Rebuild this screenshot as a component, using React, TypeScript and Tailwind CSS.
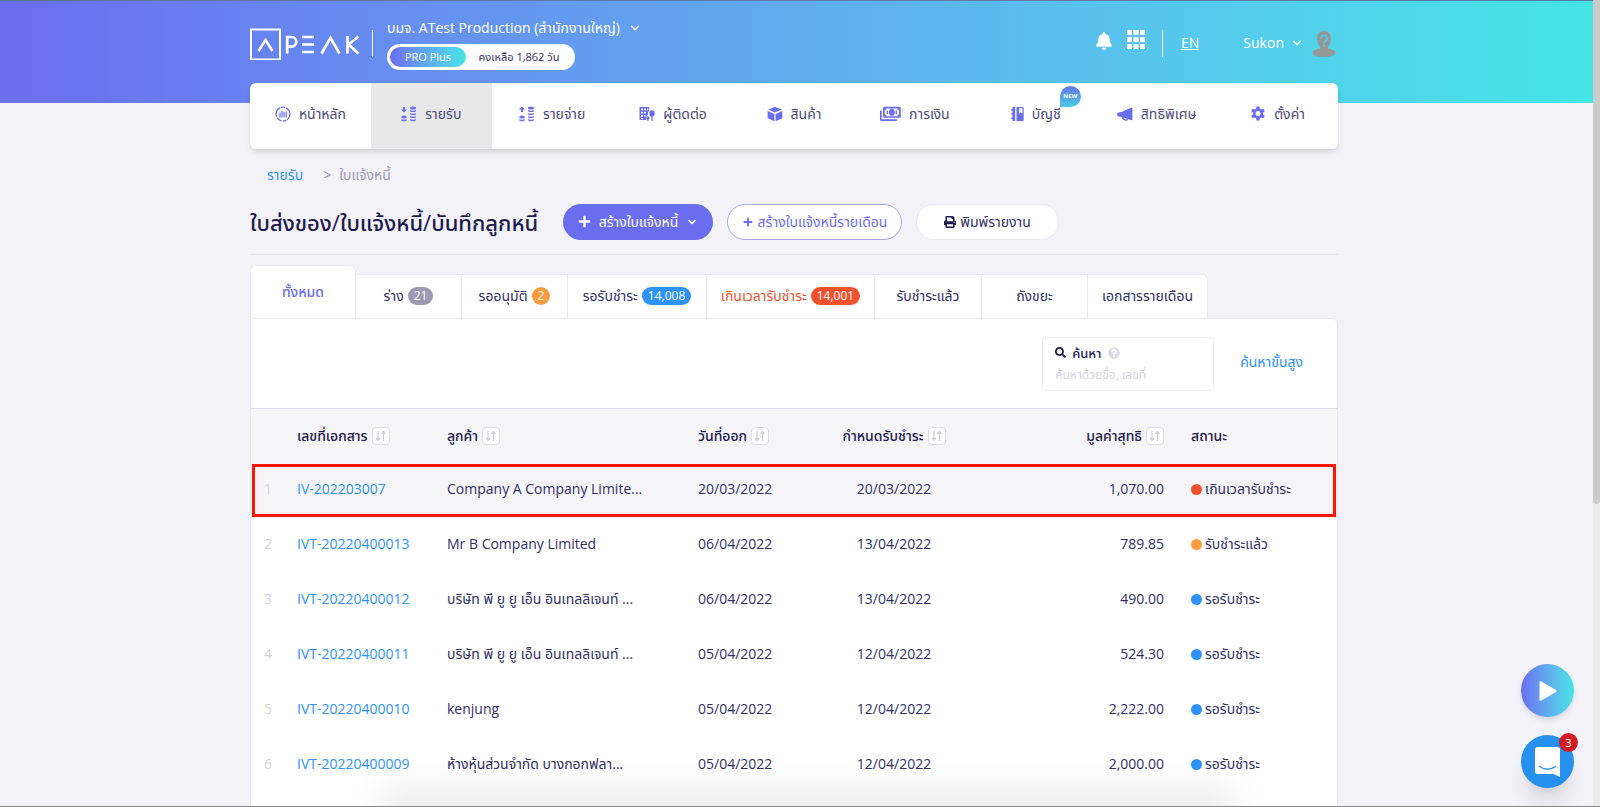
import React from 'react';
import { ChevronDown, Plus } from 'lucide-react';
import { FaBell, FaPlus, FaPrint, FaSearch, FaQuestionCircle } from 'react-icons/fa';

type IconProps = { className?: string };

function DashboardIcon({ className = 'h-4 w-4' }: IconProps) {
  return (
    <svg viewBox="0 0 16 16" className={className} fill="none" stroke="currentColor" strokeWidth="1.3" strokeLinecap="round" aria-hidden="true">
      <path d="M5 1.8A7 7 0 0 0 1.4 10.3M2.4 12.2A7 7 0 0 0 6.2 14.8M8.6 15A7 7 0 0 0 11 14.3M12.6 13.2A7 7 0 0 0 11.6 2.1M9.7 1.3A7 7 0 0 0 6.6 1.2" />
      <path d="M5 7.200V11M7 5V11M9 6.400V11M11.200 5.800V11" strokeWidth="1.2" />
    </svg>
  );
}

function CoinsIcon({ up = false }: { up?: boolean }) {
  return (
    <svg viewBox="0 0 16 16" className="h-4 w-4" fill="currentColor" aria-hidden="true">
      <path d={up ? 'M3 .6 6 3.6H4V6H2V3.6H0z' : 'M3 6.4 6 3.4H4V1H2v2.4H0z'} />
      <ellipse cx="3" cy="10.9" rx="2.8" ry="1.5" />
      <ellipse cx="12" cy="1.9" rx="3" ry="1.5" />
      <path d="M.3 12.9c1.200 1 4.200 1 5.400 0v1.300c-1 1.300-4.400 1.300-5.400 0zM9.100 4c1.300 1 4.500 1 5.800 0v1.200c-1.200 1.200-4.600 1.200-5.800 0zM9.100 7c1.300 1 4.500 1 5.800 0v1.200c-1.200 1.200-4.600 1.200-5.800 0zM9.100 10c1.300 1 4.500 1 5.800 0v1.200c-1.200 1.200-4.600 1.200-5.800 0zM9.100 12.900c1.300 1 4.500 1 5.800 0v1.300c-1.200 1.300-4.600 1.300-5.800 0z" />
    </svg>
  );
}

function ContactIcon() {
  return (
    <svg viewBox="0 0 16 16" className="h-4 w-4" fill="currentColor" aria-hidden="true">
      <path fillRule="evenodd" d="M.5 1h9.800v3.600A3.600 3.600 0 0 0 9 8.500L7 11v3H.5zM2 2.500v1.800h1.900V2.500zm3 0v1.800h1.900V2.500zm3 0v1.800h1.300V2.500zM2 5.700v1.800h1.900V5.700zm3 0v1.800h1.900V5.700zM2 8.900v1.800h1.900V8.900zm3 0v1.600h1.500V8.900zM2 12v1.300h1.900V12z" />
      <ellipse cx="13" cy="7.400" rx="2.700" ry="3.200" />
      <path d="M12.400 10h1.300v5h-1.300zM8.300 12.400h1.200V15H8.300z" />
      <circle cx="8.900" cy="11.900" r="1.700" />
    </svg>
  );
}

function BoxIcon() {
  return (
    <svg viewBox="0 0 16 16" className="h-4 w-4" fill="currentColor" aria-hidden="true">
      <path d="M8 .8 14.600 3.600 8 6.500 1.400 3.600zM.6 5l6.800 2.900v7.400L.6 12.300zM15.400 5 8.600 7.900v7.400l6.800-3z" />
    </svg>
  );
}

function MoneyIcon() {
  return (
    <svg viewBox="0 0 21 16" className="h-4 w-[21px]" fill="currentColor" aria-hidden="true">
      <path d="M0 4.500h1.700v8.800H17V15H1.500A1.500 1.500 0 0 1 0 13.500z" />
      <path fillRule="evenodd" d="M4.500.8h14.800a1.500 1.500 0 0 1 1.500 1.500v8a1.500 1.500 0 0 1-1.500 1.500H4.500A1.500 1.500 0 0 1 3 10.300v-8A1.500 1.500 0 0 1 4.500.8zM6.500 2.400A1.800 1.800 0 0 1 4.700 4.200v4.200a1.800 1.800 0 0 1 1.800 1.800h10.800a1.800 1.800 0 0 1 1.800-1.800V4.200a1.800 1.800 0 0 1-1.800-1.800z" />
      <ellipse cx="11.900" cy="6.300" rx="2.900" ry="3.500" />
      <path d="M6.700 4.400h1.400v3.800H6.700zM15.700 4.400h1.400v3.800h-1.400z" />
    </svg>
  );
}

function LedgerIcon() {
  return (
    <svg viewBox="0 0 13 16" className="h-4 w-[13px]" fill="currentColor" aria-hidden="true">
      <path d="M1.500 1h2.700v14H1.500v-2H.2v-1.500h1.300V8.700H.2V7.200h1.300V4.500H.2V3h1.300z" />
      <path fillRule="evenodd" d="M5.500 1h6a1.200 1.200 0 0 1 1.200 1.200v11.600a1.200 1.200 0 0 1-1.200 1.200h-6zm2.700 1.200v5.600l1.600-1.300 1.600 1.300V2.200z" />
    </svg>
  );
}

function HornIcon() {
  return (
    <svg viewBox="0 0 16 16" className="h-4 w-4" fill="currentColor" aria-hidden="true">
      <path d="M14.500 1.500a.7.700 0 0 1 .9.700v11.300a.7.700 0 0 1-.9.700L5.600 11.300V5.500zM5.800 5.500v5.700L1 10.300a1 1 0 0 1-.8-1V7.700a1 1 0 0 1 .8-1z" />
      <path d="M5.300 11.200c.5 3 4.700 3.600 5.300 1.700" fill="none" stroke="currentColor" strokeWidth="1.500" />
    </svg>
  );
}

function GearIcon() {
  return (
    <svg viewBox="0 0 16 16" className="h-4 w-4" fill="currentColor" aria-hidden="true">
      <path fillRule="evenodd" d="M6.500.6h3l.4 2.200a5.500 5.500 0 0 1 1.200.7l2.200-.8 1.500 2.600-1.800 1.400a5.500 5.500 0 0 1 0 1.600l1.800 1.400-1.500 2.600-2.200-.8a5.500 5.500 0 0 1-1.200.7l-.4 2.200h-3l-.4-2.200a5.500 5.500 0 0 1-1.200-.7l-2.200.8L1.200 9.700 3 8.300a5.500 5.500 0 0 1 0-1.600L1.200 5.300l1.500-2.600 2.200.8a5.500 5.500 0 0 1 1.200-.7zM8 5a2.500 2.500 0 1 0 0 5 2.500 2.500 0 0 0 0-5z" />
    </svg>
  );
}

function SortIcon() {
  return (
    <svg viewBox="0 0 12 12" className="h-3 w-3" fill="none" stroke="currentColor" strokeWidth="1.300" aria-hidden="true">
      <path d="M3 1v9M1 8l2 2.400L5 8M8.500 11V2M6.500 4l2-2.400L10.500 4" />
    </svg>
  );
}

function Logo() {
  return (
    <svg viewBox="0 0 110 32" className="h-8 w-[110px]" fill="none" stroke="white" role="img" aria-label="PEAK">
      <rect x="1" y="1.500" width="29" height="30" strokeWidth="2" />
      <path d="M8.500 23 15.500 12l7 11" strokeWidth="2.500" />
      <path d="M37.200 25.500V9h4.300a4.800 4.800 0 0 1 0 9.600h-4.300M52 9h12M52 16.500h12M52 24h12M71.500 25.500 80.500 10l9 15.500M97.500 8v17.500M108.500 8.500 98.500 16.500l10 9" strokeWidth="2.700" />
    </svg>
  );
}

function AvatarIcon() {
  return (
    <svg viewBox="0 0 24 28" className="h-7 w-6" aria-hidden="true">
      <path fill="#979797" d="M12 1c4.300 0 6.800 2.600 6.800 6.800 0 3.300-.9 6.600-2.800 9v1.600c4.200.8 7.500 2.300 7.500 4.300C22.500 26 18 27 12 27S1.500 26 .5 22.700c0-2 3.300-3.500 7.500-4.300v-1.600c-1.900-2.400-2.800-5.700-2.800-9C5.200 3.600 7.700 1 12 1z" />
      <path d="M9 8.600a3 3 0 1 1 4.500 2.300c-1 .6-1.500 1-1.500 2.300" fill="none" stroke="#50cbe3" strokeWidth="1.900" />
      <circle cx="12" cy="15.700" r="1.200" fill="#50cbe3" />
    </svg>
  );
}

const menu = [
  { label: 'หน้าหลัก', icon: <DashboardIcon /> },
  { label: 'รายรับ', icon: <CoinsIcon />, active: true },
  { label: 'รายจ่าย', icon: <CoinsIcon up /> },
  { label: 'ผู้ติดต่อ', icon: <ContactIcon /> },
  { label: 'สินค้า', icon: <BoxIcon /> },
  { label: 'การเงิน', icon: <MoneyIcon /> },
  { label: 'บัญชี', icon: <LedgerIcon />, isNew: true },
  { label: 'สิทธิพิเศษ', icon: <HornIcon /> },
  { label: 'ตั้งค่า', icon: <GearIcon /> },
];

const tabs = [
  { label: 'ร่าง', width: 'w-[106px]', count: '21', badge: 'bg-[#9c9bb3]', text: 'text-[#302f66]' },
  { label: 'รออนุมัติ', width: 'w-[106px]', count: '2', badge: 'bg-[#ff9b3f]', text: 'text-[#302f66]' },
  { label: 'รอรับชำระ', width: 'w-[139px]', count: '14,008', badge: 'bg-[#2d93fb]', text: 'text-[#302f66]' },
  { label: 'เกินเวลารับชำระ', width: 'w-[168px]', count: '14,001', badge: 'bg-[#f1512d]', text: 'text-[#f1512d]' },
  { label: 'รับชำระแล้ว', width: 'w-[107px]', text: 'text-[#302f66]' },
  { label: 'ถังขยะ', width: 'w-[106px]', text: 'text-[#302f66]' },
  { label: 'เอกสารรายเดือน', width: 'w-[120px]', text: 'text-[#302f66]' },
];

const rows = [
  { id: 'IV-202203007', customer: 'Company A Company Limite...', date: '20/03/2022', due: '20/03/2022', net: '1,070.00', status: 'เกินเวลารับชำระ', dot: 'bg-[#f1512d]' },
  { id: 'IVT-20220400013', customer: 'Mr B Company Limited', date: '06/04/2022', due: '13/04/2022', net: '789.85', status: 'รับชำระแล้ว', dot: 'bg-[#ff9b3f]' },
  { id: 'IVT-20220400012', customer: 'บริษัท พี ยู ยู เอ็น อินเทลลิเจนท์ ...', date: '06/04/2022', due: '13/04/2022', net: '490.00', status: 'รอรับชำระ', dot: 'bg-[#2d93fb]' },
  { id: 'IVT-20220400011', customer: 'บริษัท พี ยู ยู เอ็น อินเทลลิเจนท์ ...', date: '05/04/2022', due: '12/04/2022', net: '524.30', status: 'รอรับชำระ', dot: 'bg-[#2d93fb]' },
  { id: 'IVT-20220400010', customer: 'kenjung', date: '05/04/2022', due: '12/04/2022', net: '2,222.00', status: 'รอรับชำระ', dot: 'bg-[#2d93fb]' },
  { id: 'IVT-20220400009', customer: 'ห้างหุ้นส่วนจำกัด บางกอกฟลา...', date: '05/04/2022', due: '12/04/2022', net: '2,000.00', status: 'รอรับชำระ', dot: 'bg-[#2d93fb]' },
];

function HeadCell({ children, align = 'justify-start' }: { children: React.ReactNode; align?: string }) {
  return (
    <div className={`flex items-center gap-1 whitespace-nowrap ${align}`}>
      <span>{children}</span>
      <button type="button" aria-label="เรียงลำดับ" className="flex h-[18px] w-[18px] items-center justify-center rounded-sm border border-[#dddde0] bg-white text-[#cfcfd3]">
        <SortIcon />
      </button>
    </div>
  );
}

function Header() {
  return (
    <header className="h-[103px] border-t border-[#5d78a8] bg-linear-to-r from-[#6a6df0] to-[#44e5e7] pr-[5px]">
      <div className="mx-auto flex w-[1088px] max-w-full items-start text-white">
        <a href="#home" className="mt-[27px]"><Logo /></a>
        <div className="mt-[29px] ml-3 h-[27px] w-px bg-white" />
        <div className="mt-[15px] ml-[14px]">
          <button type="button" className="flex h-6 items-center gap-2 text-sm whitespace-nowrap">
            บมจ. ATest Production (สำนักงานใหญ่)
            <ChevronDown className="h-[14px] w-[14px]" strokeWidth={2.5} />
          </button>
          <div className="mt-1 flex h-[26px] w-[188px] items-center rounded-full bg-white p-[3px] text-[11px]">
            <span className="flex h-5 w-[76px] items-center justify-center rounded-full bg-linear-to-r from-[#6a6df0] to-[#44e5e7]">PRO Plus</span>
            <span className="grow text-center text-[#302f66]">คงเหลือ 1,862 วัน</span>
          </div>
        </div>
        <div className="mt-[29px] mr-[2px] ml-auto flex items-start">
          <button type="button" aria-label="การแจ้งเตือน" className="pt-[2px]"><FaBell className="h-[18px] w-4" /></button>
          <button type="button" aria-label="แอป" className="ml-[15px]">
            <svg viewBox="0 0 18 19" className="h-[19px] w-[18px]" fill="white" aria-hidden="true">
              <path d="M0 0h5v5H0zM6.500 0h5v5h-5zM13 0h5v5h-5zM0 7h5v5H0zM6.500 7h5v5h-5zM13 7h5v5h-5zM0 14h5v5H0zM6.500 14h5v5h-5zM13 14h5v5h-5z" />
            </svg>
          </button>
          <div className="ml-[17px] h-[27px] w-px bg-white" />
          <a href="#en" className="mt-[3px] ml-[18px] text-sm leading-5 underline">EN</a>
          <button type="button" className="mt-[3px] ml-11 flex items-center gap-[6px] text-sm leading-5">
            Sukon
            <ChevronDown className="h-[14px] w-[14px]" strokeWidth={2.5} />
          </button>
          <div className="ml-2"><AvatarIcon /></div>
        </div>
      </div>
    </header>
  );
}

function Menu() {
  return (
    <div className="-mt-5 pr-[5px]">
      <nav className="relative mx-auto flex h-[66px] w-[1088px] max-w-full overflow-hidden rounded-md bg-white text-sm text-[#4b4a78] shadow-md">
        {menu.map((m) => (
          <a key={m.label} href="#menu" className={`flex grow basis-0 items-center justify-center gap-2 pb-1 whitespace-nowrap ${m.active ? 'bg-[#e8e8e8]' : ''}`}>
            <span className="text-[#6a6df0]">{m.icon}</span>
            <span className="relative">
              {m.label}
              {m.isNew && (
                <span className="absolute -top-[18px] left-7 flex h-[21px] w-[21px] items-center justify-center rounded-full rounded-bl-none bg-linear-to-b from-[#6075ea] to-[#46cbe6] text-[6px] font-bold text-white">NEW</span>
              )}
            </span>
          </a>
        ))}
      </nav>
    </div>
  );
}

export default function App() {
  return (
    <div className="relative flex h-screen overflow-hidden bg-[#f3f2f8] font-['Open_Sans','Noto_Sans_Thai','Noto_Sans',sans-serif] text-sm text-[#302f66]">
      <div className="min-w-0 grow">
        <Header />
        <Menu />
        <div className="pr-[5px]">
          <main className="mx-auto w-[1088px] max-w-full">
            <div className="flex items-center gap-2 pt-4 pl-[17px] text-sm leading-5">
              <a href="#income" className="text-[#2d93fb]">รายรับ</a>
              <span className="pl-3 text-[#9c9bb3]">&gt;</span>
              <span className="text-[#9c9bb3]">ใบแจ้งหนี้</span>
            </div>
            <div className="mt-[19px] flex h-[51px] items-start border-b border-[#e4e4ec]">
              <h1 className="w-[313px] text-[22px] leading-9 font-medium whitespace-nowrap text-[#1c1a4e]">ใบส่งของ/ใบแจ้งหนี้/บันทึกลูกหนี้</h1>
              <button type="button" className="flex h-9 w-[150px] items-center justify-center gap-2 rounded-full bg-[#6a6df0] pb-px whitespace-nowrap text-white">
                <FaPlus className="h-[13px] w-[13px]" />สร้างใบแจ้งหนี้<ChevronDown className="h-3 w-3" strokeWidth={3} />
              </button>
              <button type="button" className="ml-[14px] flex h-9 w-[175px] items-center justify-center gap-1 rounded-full border border-[#a4a5f5] bg-white pb-px whitespace-nowrap text-[#6a6df0]">
                <Plus className="h-3 w-3" strokeWidth={4} />สร้างใบแจ้งหนี้รายเดือน
              </button>
              <button type="button" className="ml-[14px] flex h-9 w-[143px] items-center justify-center gap-1 rounded-full border border-[#e9e8f1] bg-white pb-px whitespace-nowrap">
                <FaPrint className="h-3 w-3 text-[#1c1a4e]" />พิมพ์รายงาน
              </button>
            </div>

            <div className="mt-[10px] flex items-end">
              <button type="button" className="h-[53px] w-[106px] rounded-t-md border border-b-0 border-[#e9e8f1] bg-white font-medium text-[#6a6df0]">ทั้งหมด</button>
              {tabs.map((t) => (
                <button key={t.label} type="button" className={`flex h-11 items-center justify-center gap-1 border-t border-r border-[#e9e8f1] bg-white pb-px whitespace-nowrap last:rounded-tr-md ${t.width} ${t.text}`}>
                  {t.label}
                  {t.count && <span className={`rounded-full px-[6px] text-xs leading-[18px] text-white ${t.badge}`}>{t.count}</span>}
                </button>
              ))}
            </div>

            <section className="rounded-tr-md border border-[#e9e8f1] bg-white">
              <div className="flex h-[89px] items-center justify-end">
                <div className="h-[54px] w-[172px] rounded border border-[#ebebf2] px-3 pt-[3px]">
                  <label htmlFor="search" className="flex items-center gap-[6px] text-[13px] leading-6 font-medium text-[#1c1a4e]">
                    <FaSearch className="h-[11px] w-[11px]" />ค้นหา<FaQuestionCircle className="h-3 w-3 text-[#dcdce8]" />
                  </label>
                  <input id="search" type="text" placeholder="ค้นหาด้วยชื่อ, เลขที่" className="block h-5 w-full text-xs outline-none placeholder:text-[#d5d5df]" />
                </div>
                <a href="#advanced" className="mr-[34px] ml-[26px] pb-1 whitespace-nowrap text-[#2d93fb]">ค้นหาขั้นสูง</a>
              </div>
              <table className="w-full table-fixed border-collapse whitespace-nowrap">
                <colgroup>
                  <col className="w-[46px]" />
                  <col className="w-[150px]" />
                  <col className="w-[251px]" />
                  <col className="w-[121px]" />
                  <col className="w-[150px]" />
                  <col className="w-[195px]" />
                  <col />
                </colgroup>
                <thead>
                  <tr className="h-[54px] border-t border-[#dcdce6] bg-[#f5f5f8] text-left font-medium text-[#1c1a4e]">
                    <td />
                    <th className="font-medium"><HeadCell>เลขที่เอกสาร</HeadCell></th>
                    <th className="font-medium"><HeadCell>ลูกค้า</HeadCell></th>
                    <th className="font-medium"><HeadCell>วันที่ออก</HeadCell></th>
                    <th className="font-medium"><HeadCell align="justify-center">กำหนดรับชำระ</HeadCell></th>
                    <th className="font-medium"><HeadCell align="justify-end">มูลค่าสุทธิ</HeadCell></th>
                    <th className="pl-[27px] font-medium">สถานะ</th>
                  </tr>
                </thead>
                <tbody>
                  {rows.map((r, i) => (
                    <tr key={r.id} className={`h-[55px] *:pb-[2px] ${i === 0 ? 'bg-[#f5f5f8] outline-3 -outline-offset-4 outline-[#fb1705]' : ''}`}>
                      <td className="pl-[13px] text-[#d3d3d8]">{i + 1}</td>
                      <td><a href="#document" className="text-[#2d93fb]">{r.id}</a></td>
                      <td>{r.customer}</td>
                      <td>{r.date}</td>
                      <td className="text-center">{r.due}</td>
                      <td className="text-right">{r.net}</td>
                      <td className="pl-[27px]">
                        <span className="flex items-center gap-[3px]"><span className={`h-[11px] w-[11px] rounded-full ${r.dot}`} />{r.status}</span>
                      </td>
                    </tr>
                  ))}
                </tbody>
              </table>
              <div className="h-16" />
            </section>
          </main>
        </div>
      </div>
      <div className="w-[7px] shrink-0 bg-[#ececec]"><div className="h-[504px] rounded-b-full bg-[#cbcbcb]" /></div>

      <div className="pointer-events-none absolute right-[380px] bottom-0 left-[395px] h-px shadow-[0_0_36px_14px_rgba(0,0,0,0.1)]" />
      <div className="absolute inset-x-0 bottom-0 h-px bg-[#8a8a8c]" />
      <div className="absolute right-[26px] bottom-[19px] flex flex-col gap-[18px]">
        <button type="button" aria-label="เล่นวิดีโอ" className="flex h-[53px] w-[53px] items-center justify-center rounded-full bg-linear-to-r from-[#6a6df0] to-[#44e5e7] shadow-md">
          <svg viewBox="0 0 20 22" className="h-[22px] w-5" aria-hidden="true"><path fill="white" d="M1.500 2.500Q1.500.5 3.300 1.500L18 10q1.500 1 0 2L3.300 20.500q-1.800 1-1.800-1z" /></svg>
        </button>
        <button type="button" aria-label="แชท" className="relative flex h-[53px] w-[53px] items-center justify-center rounded-full bg-[#2590ed] shadow-xl">
          <svg viewBox="0 0 25 30" className="h-[30px] w-[25px]" aria-hidden="true">
            <path fill="white" d="M2.500 0h20A2.500 2.500 0 0 1 25 2.500V30l-6.500-3h-16A2.500 2.500 0 0 1 0 24.500v-22A2.500 2.500 0 0 1 2.500 0z" />
            <path d="M4.500 19.500q8 5.500 16 0" fill="none" stroke="#2590ed" strokeWidth="1.500" strokeLinecap="round" />
          </svg>
          <span className="absolute -top-[2px] -right-1 flex h-[19px] w-[19px] items-center justify-center rounded-full bg-[#d11e25] text-[11px] text-white">3</span>
        </button>
      </div>
    </div>
  );
}
